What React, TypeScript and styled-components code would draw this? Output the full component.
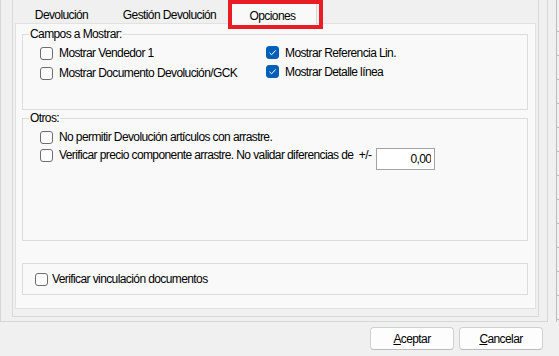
import React, { FC } from 'react';
import styled, { createGlobalStyle } from 'styled-components';

const GlobalStyle = createGlobalStyle`
  html, body {
    margin: 0;
    padding: 0;
    background: #f0f0f0;
  }
  body {
    font-family: 'Liberation Sans', Arial, sans-serif;
    font-size: 12px;
    letter-spacing: -0.6px;
    color: #000;
  }
`;

const Screen = styled.div`
  width: 559px;
  height: 356px;
  overflow: hidden;
  display: flex;
  flex-direction: column;
  background: #f0f0f0;
`;

const Top = styled.div`
  display: flex;
  height: 322px;
  flex-shrink: 0;
`;

const Dialog = styled.div`
  width: 548px;
  box-sizing: border-box;
  border: 1px solid #d6d6d6;
  border-top: none;
  padding: 0 8px 4px 11px;
  display: flex;
`;

const Strip = styled.div`
  flex: 1;
  margin-left: 8px;
  border-left: 1px solid #bdbdbd;
  background: repeating-linear-gradient(
    to bottom,
    transparent 0 23px,
    #c4c4c4 23px 24px
  );
  background-position: 0 8px;
`;

const TabControl = styled.div`
  width: 527px;
  box-sizing: border-box;
  border: 1px solid #d9d9d9;
  border-top: none;
  display: flex;
  flex-direction: column;
`;

const TabStrip = styled.div`
  position: relative;
  display: flex;
  height: 23px;
  flex-shrink: 0;
`;

const Tab = styled.div<{ $width: number; $active?: boolean }>`
  width: ${p => p.$width}px;
  box-sizing: border-box;
  display: flex;
  align-items: flex-end;
  justify-content: center;
  padding-bottom: 1px;
  line-height: 14px;
  height: ${p => (p.$active ? 24 : 23)}px;
  margin-bottom: ${p => (p.$active ? -1 : 0)}px;
  background: ${p => (p.$active ? '#f9f9f9' : 'transparent')};
  border-right: ${p => (p.$active ? '1px solid #d9d9d9' : 'none')};
  position: relative;
  z-index: 1;
`;

const Highlight = styled.div`
  position: absolute;
  left: 215px;
  top: 0;
  width: 95px;
  height: 29px;
  box-sizing: border-box;
  border: 4px solid #e81d25;
  pointer-events: none;
  z-index: 2;
`;

const Page = styled.div`
  flex: 1;
  margin: 0 2px 7px 2px;
  border: 1px solid #e2e2e2;
  background: #f9f9f9;
  display: flex;
  flex-direction: column;
  padding: 0 7px 0 6px;
`;

const Group = styled.fieldset<{ $top: number }>`
  margin: ${p => p.$top}px 0 0 0;
  padding: 0;
  border: 1px solid #dcdcdc;
  min-width: 0;
`;

const Legend = styled.legend`
  margin-left: 6px;
  padding: 0 1px;
  line-height: 14px;
`;

const GroupBody = styled.div<{ $pad: string }>`
  padding: ${p => p.$pad};
`;

const Columns = styled.div`
  display: grid;
  grid-template-columns: 226px 1fr;
`;

const Column = styled.div`
  display: flex;
  flex-direction: column;
`;

const CheckRow = styled.label<{ $height?: number; $gap?: number }>`
  display: flex;
  align-items: center;
  gap: ${p => p.$gap ?? 6}px;
  height: ${p => p.$height ?? 20}px;
  white-space: pre;
`;

const Box = styled.span<{ $checked?: boolean }>`
  width: 13px;
  height: 13px;
  box-sizing: border-box;
  border-radius: 3px;
  border: 1px solid ${p => (p.$checked ? '#005fb8' : '#6e6e6e')};
  background: ${p => (p.$checked ? '#005fb8' : '#fdfdfd')};
  display: flex;
  align-items: center;
  justify-content: center;
  flex-shrink: 0;
`;

const InputRow = styled.div`
  display: flex;
  align-items: flex-start;
`;

const NumberInput = styled.input`
  width: 59px;
  height: 22px;
  box-sizing: border-box;
  margin: 2px 0 0 5px;
  border: 1px solid #a3a3a3;
  background: #fff;
  font: inherit;
  letter-spacing: inherit;
  text-align: right;
  padding: 0 3px 0 0;
  color: #000;
  outline: none;
`;

const Footer = styled.div`
  display: flex;
  justify-content: flex-end;
  gap: 5px;
  padding: 5px 16px 0 0;
`;

const Button = styled.button`
  width: 84px;
  height: 23px;
  box-sizing: border-box;
  border: 1px solid #d0d0d0;
  border-bottom-color: #bcbcbc;
  border-radius: 4px;
  background: #fdfdfd;
  font: inherit;
  letter-spacing: inherit;
  color: #000;
  padding: 0;
`;

const Check: FC<{ checked?: boolean; label: string; height?: number; gap?: number }> = ({
  checked,
  label,
  height,
  gap,
}) => (
  <CheckRow $height={height} $gap={gap}>
    <Box $checked={checked}>
      {checked && (
        <svg width="11" height="11" viewBox="0 0 11 11">
          <polyline points="2.5,5.8 4.6,7.8 8.6,3.4" fill="none" stroke="#fff" strokeWidth="1" />
        </svg>
      )}
    </Box>
    {label}
  </CheckRow>
);

const App: FC = () => {
  return (
    <Screen>
      <GlobalStyle />
      <Top>
        <Dialog>
          <TabControl>
            <TabStrip>
              <Tab $width={97}>Devolución</Tab>
              <Tab $width={119}>Gestión Devolución</Tab>
              <Tab $width={88} $active>
                Opciones
              </Tab>
              <Highlight />
            </TabStrip>
            <Page>
              <Group $top={3}>
                <Legend>Campos a Mostrar:</Legend>
                <GroupBody $pad="2px 0 26px 17px">
                  <Columns>
                    <Column>
                      <Check label="Mostrar Vendedor 1" />
                      <Check label="Mostrar Documento Devolución/GCK" />
                    </Column>
                    <Column>
                      <Check checked height={19} label="Mostrar Referencia Lin." />
                      <Check checked height={19} label="Mostrar Detalle línea" />
                    </Column>
                  </Columns>
                </GroupBody>
              </Group>
              <Group $top={1}>
                <Legend>Otros:</Legend>
                <GroupBody $pad="3px 0 70px 17px">
                  <Check height={18} label="No permitir Devolución artículos con arrastre." />
                  <InputRow>
                    <Check
                      height={18}
                      label="Verificar precio componente arrastre. No validar diferencias de  +/-"
                    />
                    <NumberInput readOnly value="0,00" />
                  </InputRow>
                </GroupBody>
              </Group>
              <Group $top={22}>
                <GroupBody $pad="0 0 0 12px">
                  <Check height={30} gap={4} label="Verificar vinculación documentos" />
                </GroupBody>
              </Group>
            </Page>
          </TabControl>
        </Dialog>
        <Strip />
      </Top>
      <Footer>
        <Button>
          <u>A</u>ceptar
        </Button>
        <Button>
          <u>C</u>ancelar
        </Button>
      </Footer>
    </Screen>
  );
};

export default App;
